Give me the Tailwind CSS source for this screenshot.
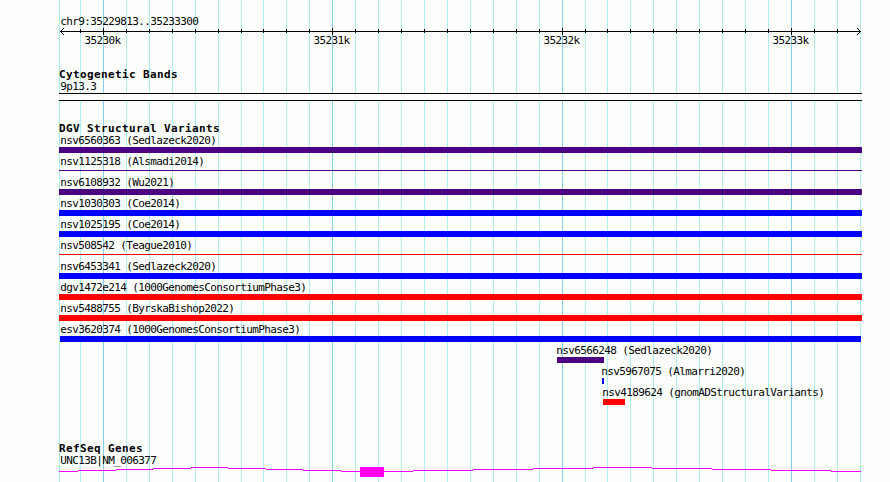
<!DOCTYPE html>
<html lang="en">
<head>
  <meta charset="UTF-8" />
  <meta name="viewport" content="width=device-width, initial-scale=1.0" />
  <title>chr9:35229813..35233300</title>
  <script src="https://cdn.jsdelivr.net/npm/@tailwindcss/browser@4"></script>
</head>
<body class="bg-[#fdfffc]">

  <main class="relative w-[890px] h-[482px] overflow-hidden font-['DejaVu_Sans_Mono',monospace] text-[11px] leading-[12px] tracking-[-0.622px] text-black whitespace-nowrap">

    <!-- Grid lines behind the tracks -->
    <svg id="grid" class="absolute inset-0" width="890" height="482" shape-rendering="crispEdges"></svg>

    <div class="relative flex flex-col">

      <!-- Ruler -->
      <section class="h-[69px] pt-4">
        <div class="pl-[60.25px] h-3">chr9:35229813..35233300</div>
        <svg id="ruler" class="block" width="890" height="7" shape-rendering="crispEdges">
          <path d="M60 3.5H861" stroke="#000" />
          <path d="M61 2h1v3h-1zM62 1h1v1h-1zM62 5h1v1h-1zM63 0h1v1h-1zM63 6h1v1h-1z" />
          <path d="M859 2h1v3h-1zM858 1h1v1h-1zM858 5h1v1h-1zM857 0h1v1h-1zM857 6h1v1h-1z" />
        </svg>
        <div class="flex pl-[84.5px]">
          <span class="w-[229px]">35230k</span>
          <span class="w-[230px]">35231k</span>
          <span class="w-[229px]">35232k</span>
          <span>35233k</span>
        </div>
      </section>

      <!-- Cytogenetic bands -->
      <section class="h-[54px]">
        <h2 class="pl-[59px] font-bold tracking-[0.378px]">Cytogenetic Bands</h2>
        <div class="pl-[60.25px]">9p13.3</div>
        <div class="ml-[59px] w-[803px] h-2 border-y border-black bg-[#fdfffc]"></div>
      </section>

      <!-- Structural variants -->
      <section class="h-[320px]">
        <h2 class="pl-[59px] font-bold tracking-[0.378px]">DGV Structural Variants</h2>
        <div id="variants"></div>
      </section>

      <!-- Genes -->
      <section>
        <h2 class="pl-[59px] font-bold tracking-[0.378px]">RefSeq Genes</h2>
        <div class="pl-[60.25px]">UNC13B|NM_006377</div>
        <svg class="block" width="890" height="15" shape-rendering="crispEdges">
          <g fill="none" stroke="#f0f">
            <path d="M59 4.5H78M78 3.5H116M116 2.5H153M153 1.5H191M191 .5H228M228 1.5H266M266 2.5H303M303 3.5H341M341 4.5H360" />
            <path d="M384 4.5H413M413 3.5H473M473 2.5H533M533 1.5H593M593 .5H652M652 1.5H712M712 2.5H771M771 3.5H831M831 4.5H861" />
          </g>
          <rect x="360" y="0" width="24" height="10" fill="#f0f" />
        </svg>
      </section>
    </div>
  </main>

  <script>
    const minor = [59, 80, 126, 149, 172, 195, 218, 241, 263, 286, 309, 355, 378, 401, 424, 447, 470, 493, 516, 539,
                   585, 607, 630, 653, 676, 699, 722, 745, 768, 814, 837, 860];
    const major = [103, 332, 562, 791];

    const line = (x, y, h, color) => `<rect x="${x}" y="${y}" width="1" height="${h}" fill="${color}"/>`;

    document.getElementById("grid").innerHTML =
      minor.map(x => line(x, 0, 482, "#afeeee")).join("") +
      major.map(x => line(x, 0, 482, "#87ceeb")).join("");

    document.getElementById("ruler").innerHTML +=
      minor.slice(1, -1).map(x => line(x, 1, 4, "#000")).join("") +
      major.map(x => line(x, 0, 7, "#000")).join("");

    // label, label x, bar start, bar end, color, thin bar
    const variants = [
      ["nsv6560363 (Sedlazeck2020)", 60.25, 59, 862, "bg-[#4b0082]"],
      ["nsv1125318 (Alsmadi2014)", 60.25, 59, 862, "bg-[#4b0082]", true],
      ["nsv6108932 (Wu2021)", 60.25, 59, 862, "bg-[#4b0082]"],
      ["nsv1030303 (Coe2014)", 60.25, 59, 862, "bg-[#0000ff]"],
      ["nsv1025195 (Coe2014)", 60.25, 59, 862, "bg-[#0000ff]"],
      ["nsv508542 (Teague2010)", 60.25, 59, 862, "bg-[#ff0000]", true],
      ["nsv6453341 (Sedlazeck2020)", 60.25, 59, 862, "bg-[#0000ff]"],
      ["dgv1472e214 (1000GenomesConsortiumPhase3)", 60.25, 59, 862, "bg-[#ff0000]"],
      ["nsv5488755 (ByrskaBishop2022)", 60.25, 59, 862, "bg-[#ff0000]"],
      ["esv3620374 (1000GenomesConsortiumPhase3)", 60.25, 60, 861, "bg-[#0000ff]"],
      ["nsv6566248 (Sedlazeck2020)", 556.25, 557, 604, "bg-[#4b0082]"],
      ["nsv5967075 (Almarri2020)", 601.25, 602, 604, "bg-[#0000ff]"],
      ["nsv4189624 (gnomADStructuralVariants)", 602.25, 603, 625, "bg-[#ff0000]"],
    ];

    document.getElementById("variants").innerHTML = variants.map(([label, x, start, end, color, thin]) => `
      <div class="h-[21px]">
        <div class="h-3" style="padding-left:${x}px">${label}</div>
        <div class="${color} ${thin ? "h-px mt-[2px]" : "h-[6px]"}" style="margin-left:${start}px;width:${end - start}px"></div>
      </div>`).join("");
  </script>

</body>
</html>
